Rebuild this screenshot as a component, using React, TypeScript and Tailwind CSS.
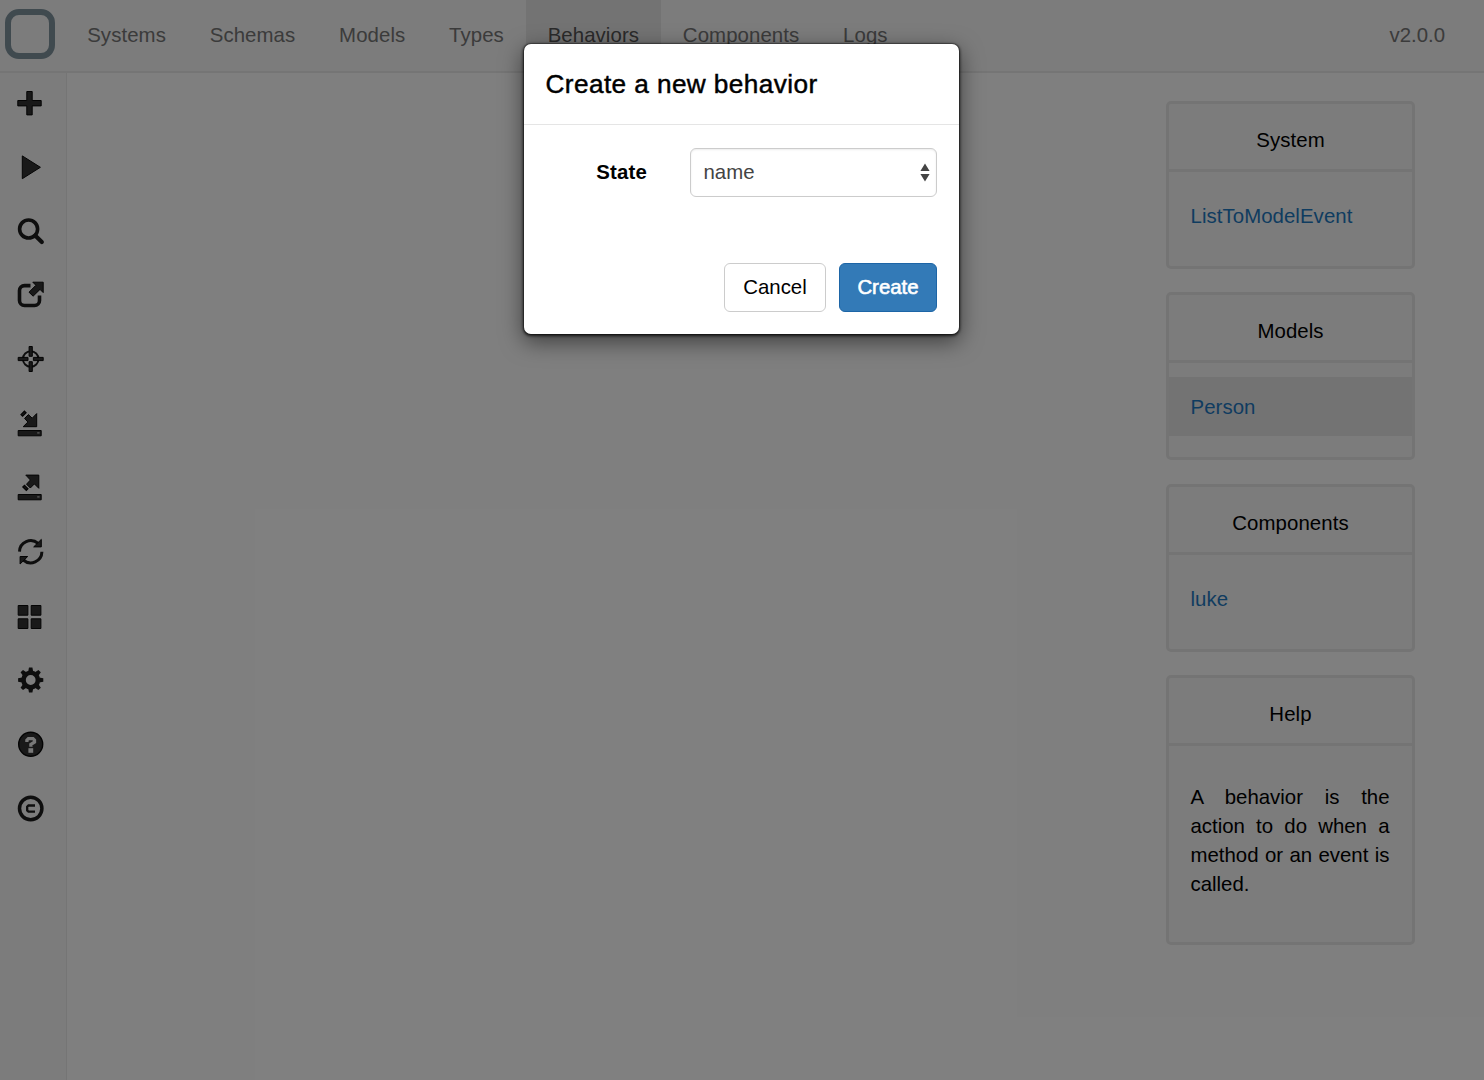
import type { ReactNode } from 'react';

const navItems = ['Systems', 'Schemas', 'Models', 'Types', 'Behaviors', 'Components', 'Logs'];

const cogTeeth = [0, 45, 90, 135, 180, 225, 270, 315];

const sidebarIcons: { name: string; art: ReactNode }[] = [
  {
    name: 'Add',
    art: <path d="M11.8 2.5h5.4v9h9v5.4h-9v9h-5.4v-9h-9v-5.4h9z" />,
  },
  { name: 'Run', art: <path d="M7.3 2.9L25.4 14.3L7.3 25.7z" /> },
  {
    name: 'Search',
    art: (
      <g fill="none" stroke="#1c1c1c">
        <circle cx="13.6" cy="12" r="9" strokeWidth="3.6" />
        <path d="M20.2 18.6L26.8 25" strokeWidth="4.2" strokeLinecap="round" />
      </g>
    ),
  },
  {
    name: 'Open',
    art: (
      <g>
        <path
          d="M15.5 4.6H9.5a5 5 0 0 0-5 5v9.9a5 5 0 0 0 5 5h10a5 5 0 0 0 5-5V14.5"
          fill="none"
          stroke="#1c1c1c"
          strokeWidth="3.6"
        />
        <path d="M17.8 1.2H28.2V11.6L25 8.4L18.1 15.2L14 11.2L20.9 4.3z" />
      </g>
    ),
  },
  {
    name: 'Center',
    art: (
      <g>
        <circle cx="15.7" cy="14" r="7.8" fill="none" stroke="#1c1c1c" strokeWidth="1.9" />
        <path d="M14.1 1.5h3.2v9.8h-3.2zM14.1 16.7h3.2v9.8h-3.2zM3.2 12.4h9.8v3.2H3.2zM18.4 12.4h9.8v3.2h-9.8z" />
      </g>
    ),
  },
  {
    name: 'Import',
    art: (
      <g>
        <path d="M3.2 21.5h23v5.3h-23z" />
        <path d="M6 5.6L9.4 2.2L11 3.8L7.6 7.2z" strokeWidth="1.3" />
        <path d="M9.6 9.4L13.4 5.6L17.2 9.2L21.7 4.6V17.7H8.2L12.9 13z" />
        <path d="M22.2 23.2h2.4v1.4h-2.4z" fill="#aaa" stroke="none" />
      </g>
    ),
  },
  {
    name: 'Export',
    art: (
      <g>
        <path d="M3.2 21.5h23v5.3h-23z" />
        <path d="M7.9 13.9L9.5 12.3L12.9 15.7L11.3 17.3z" strokeWidth="1.3" />
        <path d="M10.8 2.1H23.8V15.3L19.4 10.9L15.3 15L11.5 11.2L15.4 7z" />
        <path d="M22.2 23.2h2.4v1.4h-2.4z" fill="#aaa" stroke="none" />
      </g>
    ),
  },
  {
    name: 'Refresh',
    art: (
      <g>
        <path
          d="M4.5 14.6a11.2 11.2 0 0 1 18.6-8.2M26.9 14.8a11.2 11.2 0 0 1-18.6 8.2"
          fill="none"
          stroke="#1c1c1c"
          strokeWidth="3"
        />
        <path d="M26.3 2.4V9.9H18.7zM5.1 27V19.5H12.7z" />
      </g>
    ),
  },
  {
    name: 'Views',
    art: <path d="M3.2 4.5h9.7v9.7H3.2zM16.2 4.5h9.7v9.7h-9.7zM3.2 17.8h9.7v9.7H3.2zM16.2 17.8h9.7v9.7h-9.7z" />,
  },
  {
    name: 'Settings',
    art: (
      <g>
        {cogTeeth.map((a) => (
          <path
            key={a}
            d="M13.2 6.5L14 2.4h3.4L18.2 6.5z"
            fill="#1c1c1c"
            stroke="none"
            transform={`rotate(${a} 15.7 15)`}
          />
        ))}
        <circle cx="15.7" cy="15" r="7.2" fill="none" stroke="#1c1c1c" strokeWidth="4.6" />
      </g>
    ),
  },
  {
    name: 'Help',
    art: (
      <g>
        <circle cx="15.7" cy="15.3" r="12" strokeWidth="1.4" />
        <g fill="none" stroke="#f0f0f0" strokeWidth="3.3">
          <path d="M11.9 13V11.2L13.4 9.7H18L19.5 11.2V13L15.9 15.4V17.8" />
          <path d="M13.4 21.5h4.8" strokeWidth="4.6" />
        </g>
      </g>
    ),
  },
  {
    name: 'License',
    art: (
      <g fill="none" stroke="#1c1c1c">
        <circle cx="15.7" cy="15.5" r="11.2" strokeWidth="3.5" />
        <path d="M20 12.5h-6.5l-1.3 1.3v3.6l1.3 1.3H20" strokeWidth="2.3" />
      </g>
    ),
  },
];

function Panel({ title, children }: { title: string; children: ReactNode }) {
  return (
    <section className="mb-[23.3px] rounded-[5px] border-[3px] border-[#e9e9e9] bg-[#f8f8f8]">
      <h2 className="h-[68px] border-b-[3px] border-[#e9e9e9] pt-[21px] text-center leading-[30px] tracking-[0.08px]">
        {title}
      </h2>
      {children}
    </section>
  );
}

function PanelLink({ label, active = false }: { label: string; active?: boolean }) {
  return (
    <div className="h-[94px] pt-[14px]">
      <a
        className={`block h-[59px] pl-[21.5px] pt-[15px] leading-[30px] tracking-[0.06px] text-[#1f78c1] ${
          active ? 'bg-[#e7e7e7]' : ''
        }`}
      >
        {label}
      </a>
    </div>
  );
}

export default function App() {
  return (
    <div className="relative flex h-[1080px] w-[1484px] flex-col overflow-hidden bg-white font-['Liberation_Sans',Arial,sans-serif] text-[20.4px] text-black">
      <header className="flex h-[73px] shrink-0 items-start border-b-2 border-[#ebebeb] bg-[#f8f8f8]">
        <div className="ml-[5px] mt-[9px] size-[50px] rounded-[14px] border-[6px] border-[#80949f]" />
        <nav className="ml-[10.3px] flex h-[71px]">
          {navItems.map((item) => (
            <a
              key={item}
              className={`h-full px-[21.9px] pt-[20px] leading-[30px] tracking-[0.08px] ${
                item === 'Behaviors' ? 'bg-[#e7e7e7] text-[#555]' : 'text-[#777]'
              }`}
            >
              {item}
            </a>
          ))}
        </nav>
        <span className="ml-auto mr-[39px] pt-[20px] leading-[30px] text-[#777]">v2.0.0</span>
      </header>

      <div className="flex min-h-0 flex-1">
        <aside className="flex w-[67px] shrink-0 flex-col gap-[34px] border-r border-[#ebebeb] bg-[#f8f8f8] pl-[15px] pt-[16px]">
          {sidebarIcons.map((icon) => (
            <svg
              key={icon.name}
              aria-label={icon.name}
              width="30"
              height="30"
              viewBox="0 0 30 30"
              fill="#333"
              stroke="#080808"
              strokeWidth="1"
              className="shrink-0"
            >
              {icon.art}
            </svg>
          ))}
        </aside>
        <main className="flex-1" />
        <div className="mr-[69px] w-[249px] shrink-0 pt-[28px]">
          <Panel title="System">
            <PanelLink label="ListToModelEvent" />
          </Panel>
          <Panel title="Models">
            <PanelLink label="Person" active />
          </Panel>
          <Panel title="Components">
            <PanelLink label="luke" />
          </Panel>
          <Panel title="Help">
            <p className="h-[196.5px] pl-[21.5px] pr-[22.5px] pt-[37px] text-justify leading-[29.15px]">
              A behavior is the action to do when a method or an event is called.
            </p>
          </Panel>
        </div>
      </div>

      <div className="absolute inset-0 flex items-start bg-black/50 pl-[523px] pt-[42.5px]">
        <div className="h-[292px] w-[436.5px] rounded-[8px] border border-black/20 bg-white bg-clip-padding shadow-[0_7px_22px_rgba(0,0,0,0.5),0_1px_3px_rgba(0,0,0,0.7)]">
          <h1 className="h-[81px] border-b border-[#e5e5e5] pl-[21.5px] pt-[22px] text-[26.2px] leading-[37px] tracking-[0.41px] [-webkit-text-stroke:0.45px_black]">
            Create a new behavior
          </h1>
          <div className="flex h-[72px] items-end justify-end pr-[21.5px]">
            <label className="mr-[43px] flex h-[49px] items-center font-bold tracking-[0.2px]">State</label>
            <div className="flex h-[49px] w-[247px] items-center justify-between rounded-[6px] border-[1.5px] border-[#ccc] pl-[12.5px] pr-[6px] text-[#444] shadow-[inset_0_1px_2px_rgba(0,0,0,0.08)]">
              <span>name</span>
              <svg width="10" height="19" viewBox="0 0 10 19" fill="#444">
                <path d="M5 0.5L9.6 8H0.4zM5 18.5L0.4 11H9.6z" />
              </svg>
            </div>
          </div>
          <div className="mt-[66px] flex justify-end gap-[13px] pr-[21.5px]">
            <button className="h-[49px] w-[102px] rounded-[6px] border border-[#ccc] bg-white">Cancel</button>
            <button className="h-[49px] w-[98px] rounded-[6px] border border-[#1d65a6] bg-[#337ab7] text-white [-webkit-text-stroke:0.6px_white]">
              Create
            </button>
          </div>
        </div>
      </div>
    </div>
  );
}
